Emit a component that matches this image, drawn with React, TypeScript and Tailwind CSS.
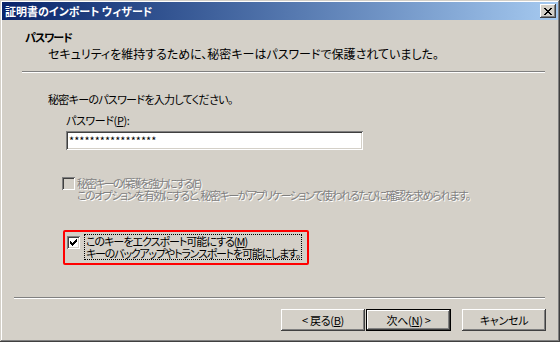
import React from "react";

const FONT = "font-['Noto_Sans_CJK_JP','Noto_Sans',sans-serif] [font-feature-settings:'palt']";

const raised =
  "shadow-[inset_-1px_-1px_#404040,inset_1px_1px_#ffffff,inset_-2px_-2px_#808080,inset_2px_2px_#d4d0c8]";
const sunken =
  "shadow-[inset_1px_1px_#808080,inset_-1px_-1px_#ffffff,inset_2px_2px_#404040,inset_-2px_-2px_#d4d0c8]";

function Check({ checked, disabled }: { checked?: boolean; disabled?: boolean }) {
  return (
    <span
      className={`flex h-[13px] w-[13px] shrink-0 items-center justify-center ${sunken} ${
        disabled ? "bg-[#d4d0c8]" : "bg-white"
      }`}
    >
      {checked && (
        <svg width="7" height="7" viewBox="0 0 7 7">
          <path d="M0 2h1v1h1v1h1V3h1V2h1V1h1V0h1v3H6v1H5v1H4v1H3v1H2V6H1V5H0z" fill="#000" />
        </svg>
      )}
    </span>
  );
}

function Button({ children, isDefault }: { children: React.ReactNode; isDefault?: boolean }) {
  return (
    <div
      className={`flex h-[22px] items-center justify-center bg-[#d4d0c8] text-[11px] tracking-[-0.3px] text-black ${
        isDefault ? "w-[85px] border border-black" : "w-[84px]"
      }`}
    >
      <div className={`flex h-full w-full items-center justify-center ${raised}`}>{children}</div>
    </div>
  );
}

export default function App() {
  return (
    <div
      className={`${FONT} flex h-[342px] w-[560px] flex-col whitespace-nowrap bg-[#d4d0c8] p-[2px] text-[11px] leading-[13px] text-black shadow-[inset_-1px_-1px_#404040,inset_1px_1px_#d4d0c8,inset_-2px_-2px_#808080,inset_2px_2px_#ffffff]`}
    >
      {/* Title bar */}
      <div className="flex h-[18px] items-center justify-between bg-gradient-to-r from-[#0a246a] to-[#a6caf0] pl-[3px] pr-[2px]">
        <span className="text-[11px] font-bold text-white">証明書のインポート ウィザード</span>
        <div className={`flex h-[14px] w-[16px] items-center justify-center bg-[#d4d0c8] ${raised}`}>
          <svg width="8" height="7" viewBox="0 0 8 7">
            <path
              d="M0 0h2v1h1v1h2V1h1V0h2v1H7v1H6v1H5v1h1v1h1v1h1v1H6V6H5V5H3v1H2v1H0V6h1V5h1V4h1V3H2V2H1V1H0z"
              fill="#000"
            />
          </svg>
        </div>
      </div>

      {/* Header */}
      <div className="pl-[23px] pt-[11px]">
        <div className="font-bold tracking-[-1px]">パスワード</div>
        <div className="mt-[3px] pl-[23px] text-[12px]">
          セキュリティを維持するために、秘密キーはパスワードで保護されていました。
        </div>
      </div>
      <div className="ml-[20px] mr-[13px] mt-[11px] h-[2px] border-b border-t border-b-white border-t-[#808080]" />

      {/* Body */}
      <div className="flex flex-col pl-[46px]">
        <div className="mt-[20px] tracking-[-0.7px]">秘密キーのパスワードを入力してください。</div>
        <div className="ml-[18px] mt-[8px] tracking-[-0.4px]">
          パスワード(<span className="underline">P</span>):
        </div>
        <div
          className={`ml-[18px] mt-[4px] flex h-[19px] w-[297px] items-center bg-white px-[3px] text-[11px] ${sunken}`}
        >
          *****************
        </div>

        <div className="ml-[14px] mt-[27px] flex items-start gap-[2px] leading-[12px] text-[#808080] [text-shadow:1px_1px_#ffffff]">
          <Check disabled />
          <div className="flex flex-col">
            <span className="tracking-[-1.8px]">秘密キーの保護を強力にする(E)</span>
            <span className="tracking-[-1.5px]">
              このオプションを有効にすると、秘密キーがアプリケーションで使われるたびに確認を求められます。
            </span>
          </div>
        </div>

        <div className="ml-[15px] mt-[29px] flex h-[35px] w-[246px] items-start gap-[4px] rounded-[2px] border-2 border-[#ff0000] px-[2px] pt-[2px] leading-[12px]">
          <div className="mt-[2px]">
            <Check checked />
          </div>
          <div className="flex flex-col border border-dotted border-black px-[1px]">
            <span className="tracking-[-1px]">
              このキーをエクスポート可能にする(<span className="underline">M</span>)
            </span>
            <span className="tracking-[-1.2px]">キーのバックアップやトランスポートを可能にします。</span>
          </div>
        </div>
      </div>

      <div className="flex-1" />

      {/* Footer */}
      <div className="ml-[12px] mr-[13px] h-[2px] border-b border-t border-b-white border-t-[#808080]" />
      <div className="mb-[9px] mr-[12px] mt-[10px] flex justify-end">
        <div className="flex gap-[1px]">
          <Button>
            &lt; 戻る(<span className="underline">B</span>)
          </Button>
          <Button isDefault>
            次へ(<span className="underline">N</span>) &gt;
          </Button>
        </div>
        <div className="ml-[11px]">
          <Button>キャンセル</Button>
        </div>
      </div>
    </div>
  );
}
